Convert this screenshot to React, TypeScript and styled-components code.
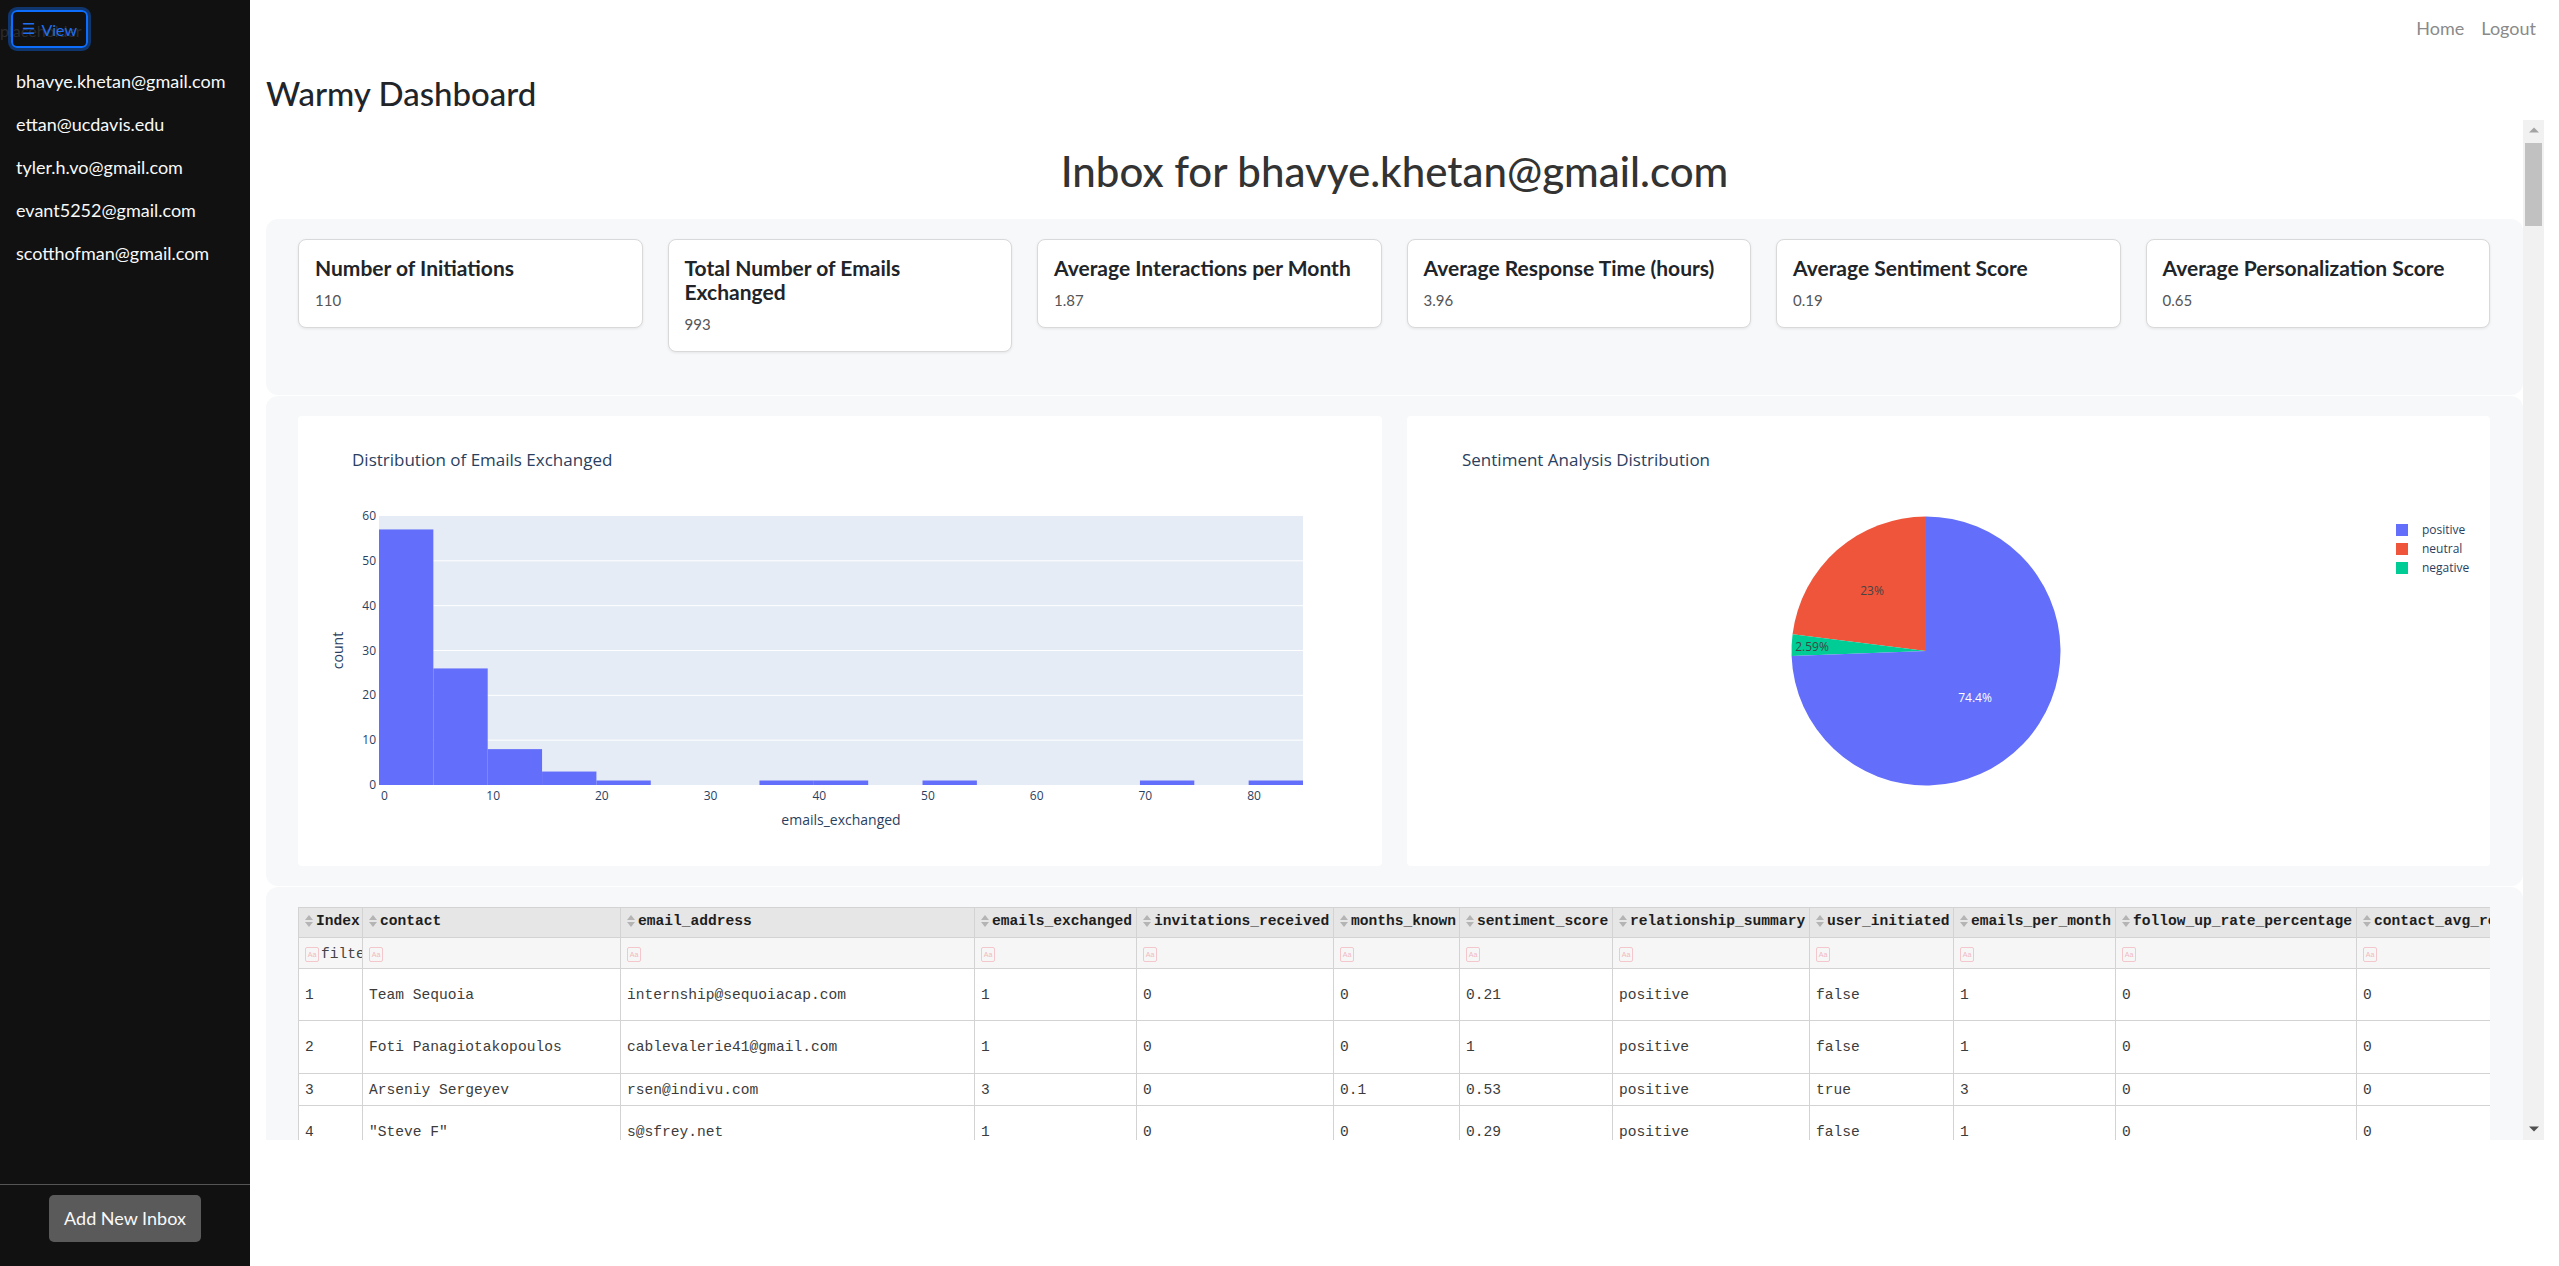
import React from "react";
import styled, { createGlobalStyle } from "styled-components";

const GlobalStyle = createGlobalStyle`
  *, *::before, *::after { box-sizing: border-box; }
  html, body { margin: 0; padding: 0; height: 100%; }
  body {
    font-family: Lato, "Liberation Sans", sans-serif;
    color: #212529;
    background: #fff;
    overflow: hidden;
  }
`;

const Shell = styled.div`
  display: flex;
  width: 100vw;
  height: 100vh;
`;

/* ---------- Sidebar ---------- */
const Sidebar = styled.aside`
  flex: 0 0 250px;
  display: flex;
  flex-direction: column;
  background: #111111;
  color: #f8f9fa;
`;

const SidebarTop = styled.div`
  position: relative;
  height: 60px;
  padding-top: 21px;
`;

const Placeholder = styled.span`
  display: block;
  font-size: 16px;
  line-height: 1.2;
  color: #2c2c2c;
`;

const ViewButton = styled.button`
  position: absolute;
  left: 11px;
  top: 10px;
  width: 77px;
  height: 38px;
  display: flex;
  align-items: center;
  justify-content: center;
  gap: 6px;
  padding: 0;
  background: transparent;
  color: #1f6ff0;
  border: 2px solid #0d6efd;
  border-radius: 6px;
  box-shadow: 0 0 0 3px rgba(13, 110, 253, 0.4);
  font-family: Lato, "Liberation Sans", sans-serif;
  font-size: 16px;
  cursor: pointer;
`;

const Hamburger = styled.span`
  font-family: "DejaVu Sans", sans-serif;
  font-size: 15px;
`;

const InboxList = styled.ul`
  list-style: none;
  margin: 0;
  padding: 0;
  flex: 1;
`;

const InboxItem = styled.li`
  padding: 8px 16px;
  font-size: 18px;
  line-height: 27px;
`;

const SidebarFooter = styled.div`
  border-top: 1px solid #555;
  padding: 10px 0 24px;
  display: flex;
  justify-content: center;
`;

const AddButton = styled.button`
  background: #5a5a5a;
  color: #f8f9fa;
  border: none;
  border-radius: 5px;
  padding: 10px 15px;
  font-family: Lato, "Liberation Sans", sans-serif;
  font-size: 18px;
  line-height: 27px;
`;

/* ---------- Main ---------- */
const Main = styled.main`
  flex: 1;
  min-width: 0;
  display: flex;
  flex-direction: column;
  padding: 0 15px 0 16px;
`;

const TopNav = styled.nav`
  display: flex;
  justify-content: flex-end;
  gap: 17px;
  padding: 15px 8px 0 0;
`;

const NavLink = styled.a`
  font-size: 18px;
  line-height: 27px;
  color: #8a8a8a;
  text-decoration: none;
`;

const PageTitle = styled.h2`
  margin: 32px 0 6px;
  font-size: 33px;
  font-weight: 500;
  line-height: 1.2;
  color: #212529;
`;

/* scroll frame with its classic scrollbar */
const ScrollFrame = styled.div`
  display: flex;
  height: 1020px;
`;

const ScrollContent = styled.div`
  flex: 1;
  min-width: 0;
  overflow: hidden;
`;

const ScrollTrack = styled.div`
  flex: 0 0 21px;
  display: flex;
  flex-direction: column;
  background: #f1f1f1;
`;

const ScrollArrow = styled.div`
  height: 21px;
  display: flex;
  align-items: center;
  justify-content: center;
`;

const ScrollThumb = styled.div`
  margin: 2px 2px 0;
  height: 83px;
  background: #c1c1c1;
`;

const ScrollSpacer = styled.div`
  flex: 1;
`;

const InboxTitle = styled.h1`
  margin: 26px 0 23px;
  text-align: center;
  font-size: 42px;
  font-weight: 500;
  line-height: 1.2;
  color: #333;
`;

const Panel = styled.section`
  background: #f7f8fa;
  border-radius: 12px;
  padding: 20px 33px 20px 32px;
  & + & {
    margin-top: 1px;
  }
`;

const StatsGrid = styled.div`
  display: grid;
  grid-template-columns: repeat(6, 1fr);
  gap: 25px;
  align-items: start;
  margin-bottom: 23px;
`;

const StatCard = styled.div`
  background: #fff;
  border: 1px solid #d9d9d9;
  border-radius: 8px;
  box-shadow: 0 1px 3px rgba(0, 0, 0, 0.08);
  padding: 16px;
`;

const CardTitle = styled.h5`
  margin: 0 0 9px;
  font-size: 21px;
  font-weight: 700;
  line-height: 24px;
  color: #212529;
`;

const CardValue = styled.p`
  margin: 0;
  font-size: 15px;
  line-height: 1.5;
  color: #555;
`;

const ChartsGrid = styled.div`
  display: grid;
  grid-template-columns: 1fr 1fr;
  gap: 25px;
`;

const ChartCard = styled.div`
  background: #fff;
  border-radius: 4px;
  height: 450px;
  overflow: hidden;
`;

const ChartSvg = styled.svg`
  display: block;
  width: 100%;
  height: 450px;
  font-family: "Open Sans", "Liberation Sans", sans-serif;
`;

/* ---------- Table ---------- */
const TableScroller = styled.div`
  overflow: hidden;
`;

const DataTable = styled.table<{ $w: number }>`
  width: ${(p) => p.$w}px;
  table-layout: fixed;
  border-collapse: collapse;
  font-family: "Liberation Mono", "DejaVu Sans Mono", monospace;
  font-size: 14.6px;
  color: #3c3c3c;
`;

const Col = styled.col<{ $w: number }>`
  width: ${(p) => p.$w}px;
`;

const HeadCell = styled.th`
  height: 30px;
  padding: 0 4px 0 6px;
  background: #e6e6e6;
  border: 1px solid #d3d3d3;
  text-align: left;
  font-weight: 700;
  color: #1e1e1e;
  white-space: nowrap;
  overflow: hidden;
`;

const HeadInner = styled.span`
  display: inline-flex;
  align-items: center;
  gap: 3px;
`;

const FilterCell = styled.td`
  height: 31px;
  padding: 0 4px 0 6px;
  background: #f6f6f6;
  border: 1px solid #d3d3d3;
  white-space: nowrap;
  overflow: hidden;
`;

const FilterInner = styled.span`
  display: inline-flex;
  align-items: center;
  gap: 2px;
  color: #444;
`;

const CaseToggle = styled.span`
  display: inline-flex;
  align-items: center;
  justify-content: center;
  width: 14px;
  height: 15px;
  border: 1px solid #f4c7cc;
  border-radius: 2px;
  font-family: "Liberation Sans", sans-serif;
  font-size: 7px;
  color: #f1b8bf;
  flex: none;
`;

const BodyRow = styled.tr<{ $h: number }>`
  height: ${(p) => p.$h}px;
`;

const BodyCell = styled.td`
  padding: 0 4px 0 6px;
  border: 1px solid #d3d3d3;
  background: #fff;
  white-space: nowrap;
  overflow: hidden;
  vertical-align: middle;
`;

/* ---------- Data ---------- */
const inboxes = [
  "bhavye.khetan@gmail.com",
  "ettan@ucdavis.edu",
  "tyler.h.vo@gmail.com",
  "evant5252@gmail.com",
  "scotthofman@gmail.com",
];

const stats = [
  { title: "Number of Initiations", value: "110" },
  { title: "Total Number of Emails Exchanged", value: "993" },
  { title: "Average Interactions per Month", value: "1.87" },
  { title: "Average Response Time (hours)", value: "3.96" },
  { title: "Average Sentiment Score", value: "0.19" },
  { title: "Average Personalization Score", value: "0.65" },
];

const columns: { name: string; w: number }[] = [
  { name: "Index", w: 64 },
  { name: "contact", w: 258 },
  { name: "email_address", w: 354 },
  { name: "emails_exchanged", w: 162 },
  { name: "invitations_received", w: 197 },
  { name: "months_known", w: 126 },
  { name: "sentiment_score", w: 153 },
  { name: "relationship_summary", w: 197 },
  { name: "user_initiated", w: 144 },
  { name: "emails_per_month", w: 162 },
  { name: "follow_up_rate_percentage", w: 241 },
  { name: "contact_avg_response_time", w: 250 },
];

const rows: { h: number; cells: string[] }[] = [
  { h: 52, cells: ["1", "Team Sequoia", "internship@sequoiacap.com", "1", "0", "0", "0.21", "positive", "false", "1", "0", "0"] },
  { h: 53, cells: ["2", "Foti Panagiotakopoulos", "cablevalerie41@gmail.com", "1", "0", "0", "1", "positive", "false", "1", "0", "0"] },
  { h: 32, cells: ["3", "Arseniy Sergeyev", "rsen@indivu.com", "3", "0", "0.1", "0.53", "positive", "true", "3", "0", "0"] },
  { h: 52, cells: ["4", "\"Steve F\"", "s@sfrey.net", "1", "0", "0", "0.29", "positive", "false", "1", "0", "0"] },
];

const tableWidth = columns.reduce((s, c) => s + c.w, 0);

/* ---------- Icons ---------- */
const SortIcon = () => (
  <svg width="8" height="14" viewBox="0 0 8 14" aria-hidden>
    <path d="M0 6 L4 1 L8 6 Z" fill="#b4b4b4" />
    <path d="M0 8 L4 13 L8 8 Z" fill="#b4b4b4" />
  </svg>
);

const ArrowGlyph = ({ up, color }: { up?: boolean; color: string }) => (
  <svg width="10" height="6" viewBox="0 0 10 6" aria-hidden>
    <path d={up ? "M0 5.5 L5 0.5 L10 5.5 Z" : "M0 0.5 L5 5.5 L10 0.5 Z"} fill={color} />
  </svg>
);

/* ---------- Charts ---------- */
const TXT = "#2a3f5f";
const plot = { x0: 81, x1: 1005, y0: 100, y1: 369 };
const xs = (v: number) => plot.x0 + ((v + 0.5) * (plot.x1 - plot.x0)) / 85;
const ys = (c: number) => plot.y1 - (c * (plot.y1 - plot.y0)) / 60;
const bins: [number, number][] = [
  [-0.5, 57], [4.5, 26], [9.5, 8], [14.5, 3], [19.5, 1],
  [34.5, 1], [39.5, 1], [49.5, 1], [69.5, 1], [79.5, 1],
];

const Histogram = () => (
  <ChartSvg viewBox="0 0 1083 450" preserveAspectRatio="xMinYMin meet">
    <text x={54} y={50} fontSize={17} fill={TXT}>Distribution of Emails Exchanged</text>
    <rect x={plot.x0} y={plot.y0} width={plot.x1 - plot.x0} height={plot.y1 - plot.y0} fill="#e5ecf6" />
    {[10, 20, 30, 40, 50].map((c) => (
      <line key={c} x1={plot.x0} x2={plot.x1} y1={ys(c)} y2={ys(c)} stroke="#fff" strokeWidth={1} />
    ))}
    {bins.map(([b, c]) => (
      <rect key={b} x={xs(b)} y={ys(c)} width={xs(b + 5) - xs(b)} height={plot.y1 - ys(c)} fill="#636efa" />
    ))}
    {[0, 10, 20, 30, 40, 50, 60].map((c) => (
      <text key={c} x={78} y={ys(c) + 4} fontSize={12} fill={TXT} textAnchor="end">{c}</text>
    ))}
    {[0, 10, 20, 30, 40, 50, 60, 70, 80].map((v) => (
      <text key={v} x={xs(v)} y={384} fontSize={12} fill={TXT} textAnchor="middle">{v}</text>
    ))}
    <text x={(plot.x0 + plot.x1) / 2} y={409} fontSize={14} fill={TXT} textAnchor="middle">emails_exchanged</text>
    <text x={0} y={0} fontSize={14} fill={TXT} textAnchor="middle" transform={`translate(45 ${(plot.y0 + plot.y1) / 2}) rotate(-90)`}>count</text>
  </ChartSvg>
);

const PC = { cx: 519, cy: 235, r: 134.5 };
const pt = (deg: number) => {
  const a = (deg * Math.PI) / 180;
  return `${(PC.cx - PC.r * Math.sin(a)).toFixed(2)} ${(PC.cy - PC.r * Math.cos(a)).toFixed(2)}`;
};
const wedge = (from: number, to: number) =>
  `M${PC.cx} ${PC.cy} L${pt(from)} A${PC.r} ${PC.r} 0 ${to - from > 180 ? 1 : 0} 0 ${pt(to)} Z`;

const legend = [
  { label: "positive", color: "#636efa" },
  { label: "neutral", color: "#ef553b" },
  { label: "negative", color: "#00cc96" },
];

const PieChart = () => (
  <ChartSvg viewBox="0 0 1083 450" preserveAspectRatio="xMinYMin meet">
    <text x={55} y={50} fontSize={17} fill={TXT}>Sentiment Analysis Distribution</text>
    <path d={wedge(0, 82.8)} fill="#ef553b" />
    <path d={wedge(82.8, 92.12)} fill="#00cc96" />
    <path d={wedge(92.12, 360)} fill="#636efa" />
    <text x={465} y={179} fontSize={12} fill="#444" textAnchor="middle">23%</text>
    <text x={405} y={235} fontSize={12} fill="#444" textAnchor="middle">2.59%</text>
    <text x={568} y={286} fontSize={12} fill="#fff" textAnchor="middle">74.4%</text>
    {legend.map((l, i) => (
      <g key={l.label} transform={`translate(995 ${114 + i * 19})`}>
        <rect x={-6} y={-6} width={12} height={12} fill={l.color} />
        <text x={20} y={4} fontSize={12} fill={TXT}>{l.label}</text>
      </g>
    ))}
  </ChartSvg>
);

export default function App() {
  return (
    <>
      <GlobalStyle />
      <Shell>
        <Sidebar>
          <SidebarTop>
            <Placeholder>placeholder</Placeholder>
            <ViewButton>
              <Hamburger>☰</Hamburger>
              <span>View</span>
            </ViewButton>
          </SidebarTop>
          <InboxList>
            {inboxes.map((m) => (
              <InboxItem key={m}>{m}</InboxItem>
            ))}
          </InboxList>
          <SidebarFooter>
            <AddButton>Add New Inbox</AddButton>
          </SidebarFooter>
        </Sidebar>

        <Main>
          <TopNav>
            <NavLink href="#">Home</NavLink>
            <NavLink href="#">Logout</NavLink>
          </TopNav>
          <PageTitle>Warmy Dashboard</PageTitle>

          <ScrollFrame>
            <ScrollContent>
              <InboxTitle>Inbox for bhavye.khetan@gmail.com</InboxTitle>

              <Panel>
                <StatsGrid>
                  {stats.map((s) => (
                    <StatCard key={s.title}>
                      <CardTitle>{s.title}</CardTitle>
                      <CardValue>{s.value}</CardValue>
                    </StatCard>
                  ))}
                </StatsGrid>
              </Panel>

              <Panel>
                <ChartsGrid>
                  <ChartCard>
                    <Histogram />
                  </ChartCard>
                  <ChartCard>
                    <PieChart />
                  </ChartCard>
                </ChartsGrid>
              </Panel>

              <Panel>
                <TableScroller>
                  <DataTable $w={tableWidth}>
                    <colgroup>
                      {columns.map((c) => (
                        <Col key={c.name} $w={c.w} />
                      ))}
                    </colgroup>
                    <thead>
                      <tr>
                        {columns.map((c) => (
                          <HeadCell key={c.name}>
                            <HeadInner>
                              <SortIcon />
                              {c.name}
                            </HeadInner>
                          </HeadCell>
                        ))}
                      </tr>
                      <tr>
                        {columns.map((c, i) => (
                          <FilterCell key={c.name}>
                            <FilterInner>
                              <CaseToggle>Aa</CaseToggle>
                              {i === 0 ? "filter data..." : null}
                            </FilterInner>
                          </FilterCell>
                        ))}
                      </tr>
                    </thead>
                    <tbody>
                      {rows.map((r) => (
                        <BodyRow key={r.cells[0]} $h={r.h}>
                          {r.cells.map((v, i) => (
                            <BodyCell key={i}>{v}</BodyCell>
                          ))}
                        </BodyRow>
                      ))}
                    </tbody>
                  </DataTable>
                </TableScroller>
              </Panel>
            </ScrollContent>
            <ScrollTrack>
              <ScrollArrow>
                <ArrowGlyph up color="#a3a3a3" />
              </ScrollArrow>
              <ScrollThumb />
              <ScrollSpacer />
              <ScrollArrow>
                <ArrowGlyph color="#505050" />
              </ScrollArrow>
            </ScrollTrack>
          </ScrollFrame>
        </Main>
      </Shell>
    </>
  );
}
